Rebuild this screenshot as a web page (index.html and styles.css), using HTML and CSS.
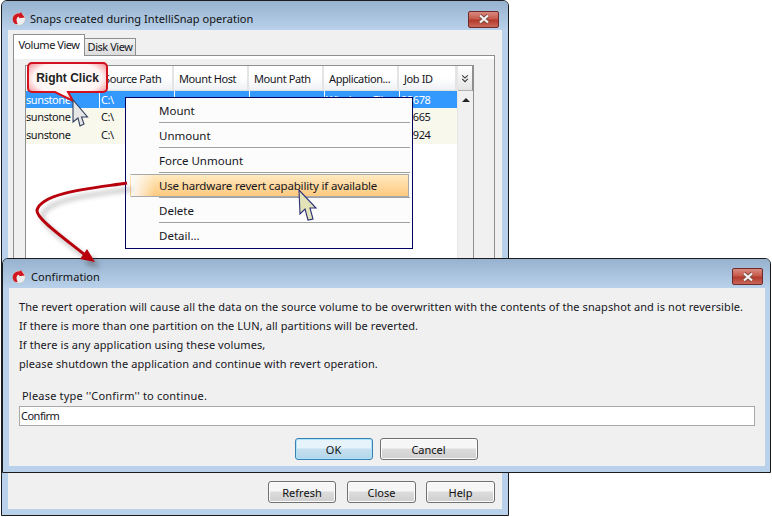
FILE: index.html
```html
<!DOCTYPE html>
<html lang="en">
<head>
<meta charset="utf-8">
<title>Snaps created during IntelliSnap operation</title>
<link rel="stylesheet" href="styles.css">
</head>
<body>
<div class="desktop">
  <section class="window window-snaps">
    <header class="titlebar">
      <svg class="app-icon" viewBox="0 0 16 16"><circle cx="8" cy="8" r="7.300" fill="#eee" stroke="#aaa" stroke-width=".5"/><path d="M3.200 13.500C.8 11.500 .2 8 1.500 5.200 3 2.200 6.200 .8 9.200 1.500L10 0l4.600 6.300-6.800.7.800-1.600C6.500 5 5 7 5.200 9.500c.1 1.600.6 3 1.400 4.500-1.300 0-2.500-.2-3.400-.5z" fill="#d0161f"/></svg>
      <span class="title-text">Snaps created during IntelliSnap operation</span>
      <span class="close-btn"><svg viewBox="0 0 16 10"><path d="M4 1.500l8 7M12 1.500l-8 7" stroke="#7d4a44" stroke-width="3.800" fill="none"/><path d="M4 1.500l8 7M12 1.500l-8 7" stroke="#f4f4f4" stroke-width="2.200" fill="none"/></svg></span>
    </header>
    <div class="client">
      <nav class="tabs">
        <span class="tab tab-active">Volume View</span>
        <span class="tab">Disk View</span>
      </nav>
      <div class="tab-panel">
        <div class="table">
          <div class="table-main">
            <div class="row head">
              <span class="cell"></span><span class="cell">Source Path</span><span class="cell">Mount Host</span><span class="cell">Mount Path</span><span class="cell">Application...</span><span class="cell">Job ID</span>
            </div>
            <div class="row selected">
              <span class="cell">sunstone</span><span class="cell">C:\</span><span class="cell"></span><span class="cell"></span><span class="cell">Windows File</span><span class="cell">23678</span>
            </div>
            <div class="row tint">
              <span class="cell">sunstone</span><span class="cell">C:\</span><span class="cell"></span><span class="cell"></span><span class="cell"></span><span class="cell">23665</span>
            </div>
            <div class="row tint">
              <span class="cell">sunstone</span><span class="cell">C:\</span><span class="cell"></span><span class="cell"></span><span class="cell"></span><span class="cell">22924</span>
            </div>
          </div>
          <div class="scroll-col">
            <span class="corner-btn"><svg viewBox="0 0 10 10"><path d="M1.500 1l3.500 3.500L8.500 1M1.500 5.500L5 9l3.500-3.500" stroke="#333" stroke-width="1.300" fill="none"/></svg></span>
            <span class="scroll-up"></span>
          </div>
        </div>
      </div>
      <footer class="actions">
        <button class="btn btn-sm">Refresh</button>
        <button class="btn btn-close">Close</button>
        <button class="btn btn-close">Help</button>
      </footer>
    </div>
  </section>

  <div class="menu">
    <div class="menu-item">Mount</div>
    <div class="menu-item">Unmount</div>
    <div class="menu-item">Force Unmount</div>
    <div class="menu-item is-hot"><span class="hot-bar"></span><span class="hot-label">Use hardware revert capability if available</span></div>
    <div class="menu-item">Delete</div>
    <div class="menu-item last">Detail...</div>
  </div>

  <section class="window window-confirm">
    <header class="titlebar">
      <svg class="app-icon" viewBox="0 0 16 16"><circle cx="8" cy="8" r="7.300" fill="#eee" stroke="#aaa" stroke-width=".5"/><path d="M3.200 13.500C.8 11.500 .2 8 1.500 5.200 3 2.200 6.200 .8 9.200 1.500L10 0l4.600 6.300-6.800.7.800-1.600C6.500 5 5 7 5.200 9.500c.1 1.600.6 3 1.400 4.500-1.300 0-2.500-.2-3.400-.5z" fill="#d0161f"/></svg>
      <span class="title-text">Confirmation</span>
      <span class="close-btn"><svg viewBox="0 0 16 10"><path d="M4 1.500l8 7M12 1.500l-8 7" stroke="#7d4a44" stroke-width="3.800" fill="none"/><path d="M4 1.500l8 7M12 1.500l-8 7" stroke="#f4f4f4" stroke-width="2.200" fill="none"/></svg></span>
    </header>
    <div class="client confirm-client">
      <div class="message">
        <p>The revert operation will cause all the data on the source volume to be overwritten with the contents of the snapshot and is not reversible.</p>
        <p>If there is more than one partition on the LUN, all partitions will be reverted.</p>
        <p>If there is any application using these volumes,</p>
        <p>please shutdown the application and continue with revert operation.</p>
      </div>
      <label class="prompt">Please type ''Confirm'' to continue.</label>
      <div class="input">Confirm</div>
      <div class="confirm-actions">
        <button class="btn btn-ok">OK</button>
        <button class="btn btn-cancel">Cancel</button>
      </div>
    </div>
  </section>

  <svg class="arrow" viewBox="0 0 140 100">
    <defs>
      <filter id="soft" x="-20%" y="-20%" width="140%" height="140%"><feGaussianBlur stdDeviation="2.500"/></filter>
    </defs>
    <g transform="translate(5 6)" opacity=".45" filter="url(#soft)">
      <path d="M127 3C95 8 42 12 37 30C36 38 60 55 85 75" stroke="#555" stroke-width="3" fill="none"/>
      <path d="M80 79L87 69L95 82Z" fill="#555"/>
    </g>
    <path d="M127 3C95 8 42 12 37 30C36 38 60 55 85 75" stroke="#b8000c" stroke-width="3" fill="none"/>
    <path d="M80 79L87 69L95 82Z" fill="#b8000c"/>
  </svg>

  <div class="callout">
    <svg class="callout-shape" viewBox="0 0 82 42">
      <defs>
        <radialGradient id="pink" cx=".5" cy=".4" r=".62"><stop offset="0" stop-color="#fff"/><stop offset=".7" stop-color="#fff4f4"/><stop offset="1" stop-color="#f28d93"/></radialGradient>
      </defs>
      <path d="M5 1H76a4 4 0 0 1 4 4V26a4 4 0 0 1-4 4H41L46 39L28 30H5a4 4 0 0 1-4-4V5a4 4 0 0 1 4-4Z" fill="url(#pink)" stroke="#d3101e" stroke-width="2"/>
    </svg>
    <span class="callout-label">Right Click</span>
  </div>

  <svg class="cursor cursor-white" viewBox="0 0 20 32"><path d="M1 1V23L6 19L8 27L12 25L9.500 18H15.500Z" fill="#e6e6e6" stroke="#33415f" stroke-width="1.100"/></svg>
  <svg class="cursor cursor-yellow" viewBox="0 0 20 32"><path d="M1 1L2 25L7 20L10 31L15 30L12 19H18Z" fill="#e3e3b8" stroke="#2b2f7c" stroke-width="1.100"/></svg>
</div>
</body>
</html>
```
FILE: styles.css
```css
* { box-sizing: border-box; }
html, body { margin: 0; padding: 0; }
body {
  background: #fff;
  font-family: "Noto Sans", "DejaVu Sans", sans-serif;
  font-size: 11px;
  color: #161622;
}
.desktop { position: relative; width: 772px; height: 517px; overflow: hidden; }

.window {
  position: absolute;
  display: flex;
  flex-direction: column;
  border: 1px solid #1c1c1c;
  border-radius: 6px 6px 0 0;
  background: #b9d1ea;
  padding: 0 6px 6px;
}
.window-snaps { left: 1px; top: 0; width: 508px; height: 516px; }
.window-confirm { left: 2px; top: 258px; width: 769px; height: 215px; padding-right: 5px; }

.titlebar {
  flex: none;
  display: flex;
  align-items: center;
  height: 29px;
  margin: 0 -6px;
  padding: 7px 9px 0 10px;
  background: linear-gradient(#97b2cf, #b9d1ea);
  border-radius: 5px 5px 0 0;
}
.window-confirm .titlebar { margin-right: -5px; padding: 6px 7px 0 9px; }
.app-icon { width: 14px; height: 14px; flex: none; }
.title-text { margin-left: 4px; font-size: 11px; letter-spacing: .05px; color: #111; }
.window-snaps .title-text { padding-bottom: 2px; }
.window-confirm .title-text { margin-left: 5px; }
.close-btn {
  margin-left: auto;
  width: 31px;
  height: 17px;
  display: flex;
  align-items: center;
  justify-content: center;
  border: 1px solid #6e2a2a;
  border-radius: 2px;
  background: linear-gradient(#d98a80, #c65a4c 45%, #b23a2c 55%, #c9675a);
}
.close-btn svg { width: 16px; height: 10px; }

.client {
  flex: 1;
  min-height: 0;
  display: flex;
  flex-direction: column;
  background: #f0f0f0;
}
.window-snaps .client { padding: 5px 7px 6px 5px; }

.tabs { flex: none; display: flex; align-items: flex-end; height: 21px; margin-bottom: -1px; position: relative; z-index: 1; }
.tab {
  display: flex;
  align-items: center;
  justify-content: center;
  width: 51px;
  height: 18px;
  padding-bottom: 2px;
  letter-spacing: -.45px;
  border: 1px solid #8e8f8f;
  border-left: 0;
  background: linear-gradient(#f2f2f2, #dcdcdc);
}
.tab-active {
  width: 72px;
  height: 22px;
  border-left: 1px solid #8e8f8f;
  border-bottom: 0;
  background: #fff;
}

.tab-panel {
  flex: 1;
  min-height: 0;
  display: flex;
  border: 1px solid #8e8f8f;
  background: linear-gradient(#fff 3px, #f0f0f0 3px);
  padding: 9px 20px 4px 11px;
}
.table { flex: 1; display: flex; border: 1px solid #8e8f8f; background: #fff; letter-spacing: -.4px; }
.table-main { flex: 1; }
.row {
  display: grid;
  grid-template-columns: 73px 75px 75px 75px 75px 58px;
  height: 18px;
  align-items: center;
}
.cell { white-space: nowrap; overflow: hidden; }
.head { height: 25px; align-items: stretch; }
.head .cell {
  display: flex;
  align-items: center;
  padding-left: 5px;
  border-right: 2px solid #e4e4e4;
  border-bottom: 1px solid #e0e0e0;
  background: linear-gradient(#fff 50%, #eef1f5);
}
.selected { height: 17px; background: #3399ff; color: #fff; }
.selected .cell { height: 100%; display: flex; align-items: center; padding-bottom: 1px; }
.selected .cell + .cell { border-left: 1px solid #fff; padding-left: 1px; }
.tint { background: #f8f8ec; padding-bottom: 1px; }
.tint .cell + .cell { padding-left: 2px; }
.scroll-col { flex: none; width: 16px; display: flex; flex-direction: column; background: #f0f0f0; border-left: 1px solid #e6e6e6; }
.corner-btn {
  height: 25px;
  display: flex;
  align-items: center;
  justify-content: center;
  background: linear-gradient(#fff, #e4e4e4);
  border-right: 1px solid #8e8f8f;
  border-bottom: 1px solid #b0b0b0;
}
.corner-btn svg { width: 8px; height: 9px; }
.scroll-up {
  align-self: center;
  margin-top: 7px;
  width: 0;
  height: 0;
  border-left: 4px solid transparent;
  border-right: 4px solid transparent;
  border-bottom: 4px solid #222;
}

.actions { flex: none; display: flex; justify-content: flex-end; gap: 10px; padding-top: 10px; }
.btn {
  display: block;
  font: inherit;
  color: #111;
  height: 22px;
  padding: 0;
  border: 1px solid #707070;
  border-radius: 3px;
  background: linear-gradient(#f6f6f6 45%, #dcdcdc 50%, #cfcfcf);
  box-shadow: inset 0 0 0 1px #fcfcfc;
}
.btn-sm { width: 68px; margin-right: 1px; }
.btn-close { width: 69px; }

.menu {
  position: absolute;
  left: 125px;
  top: 97px;
  width: 288px;
  height: 152px;
  padding-left: 33px;
  display: flex;
  flex-direction: column;
  border: 1px solid #000060;
  background: #fcfcfc;
  font-size: 11.500px;
}
.menu-item {
  position: relative;
  flex: none;
  height: 25px;
  display: flex;
  align-items: center;
  margin-right: 2px;
  border-bottom: 1px solid #a0a0a0;
}
.menu-item.last { border-bottom-color: transparent; }
.hot-bar {
  position: absolute;
  left: -29px;
  right: 1px;
  top: 1px;
  bottom: 0;
  border: 1px solid #a9a9a9;
  border-left-color: transparent;
  background: linear-gradient(to right, #fcfcfc, rgba(252, 252, 252, 0) 24px), linear-gradient(#ffeac0, #fdc97f);
}
.hot-label { position: relative; letter-spacing: -.16px; }

.confirm-client { padding: 9px 10px 0; }
.message p { margin: 0; height: 19px; line-height: 19px; white-space: nowrap; letter-spacing: .085px; }
.prompt { display: block; margin: 13px 0 0 3px; height: 19px; line-height: 19px; letter-spacing: .2px; }
.input {
  height: 20px;
  margin-top: 1px;
  padding-left: 1px;
  line-height: 18px;
  letter-spacing: -.5px;
  border: 1px solid #a9a9a9;
  background: #fff;
}
.confirm-actions { display: flex; justify-content: center; gap: 7px; margin-top: 12px; padding-right: 2px; }
.btn-ok {
  width: 78px;
  border-color: #3c7fb1;
  background: linear-gradient(#e6f3fa 45%, #c4e0f0 50%, #b3d6ea);
  box-shadow: inset 0 0 0 1px #a8e5fb;
}
.btn-cancel { width: 98px; }

.arrow { position: absolute; left: 0; top: 180px; width: 140px; height: 100px; }
.callout { position: absolute; left: 27px; top: 62px; width: 82px; height: 42px; }
.callout-shape { position: absolute; left: 0; top: 0; width: 82px; height: 42px; }
.callout-label {
  position: absolute;
  left: 0;
  top: 0;
  width: 81px;
  height: 31px;
  display: flex;
  align-items: center;
  justify-content: center;
  font-family: "Liberation Sans", sans-serif;
  font-weight: 700;
  font-size: 12px;
  color: #222;
}
.cursor { position: absolute; width: 20px; height: 32px; }
.cursor-white { left: 72px; top: 99px; }
.cursor-yellow { left: 298px; top: 189px; }
```
